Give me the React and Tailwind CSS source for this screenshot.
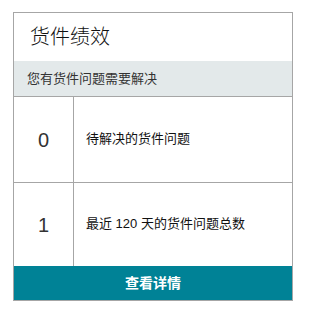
import React from "react";

const rows = [
  { value: "0", label: "待解决的货件问题" },
  { value: "1", label: "最近 120 天的货件问题总数" },
];

export default function App() {
  return (
    <div
      className="w-[305px] h-[311px] bg-white pt-[12px] pl-[13px]"
      style={{ fontFamily: '"Liberation Sans", Arial, "Noto Sans CJK SC", sans-serif' }}
    >
      <div className="w-[280px] border border-[#a6a6a6] flex flex-col">
        <div className="h-[48px] flex items-center pl-[16px]">
          <h2 className="text-[20px] font-light text-[#111] leading-none">货件绩效</h2>
        </div>
        <div className="h-[36px] bg-[#e3e9ea] flex items-center pl-[13px] border-b border-[#a6a6a6]">
          <span className="text-[13px] text-[#333]">您有货件问题需要解决</span>
        </div>
        {rows.map((row, i) => (
          <div
            key={i}
            className={
              i > 0
                ? "flex h-[84px] border-t border-[#a6a6a6]"
                : "flex h-[85px]"
            }
          >
            <div className="w-[60px] border-r border-[#a6a6a6] flex items-center justify-center">
              <span className="text-[20px] text-[#333]">{row.value}</span>
            </div>
            <div className="flex-1 flex items-center pl-[12px] pb-[2px]">
              <span className="text-[13px] text-[#111]">{row.label}</span>
            </div>
          </div>
        ))}
        <button className="h-[34px] bg-[#008296] text-white text-[14px] font-bold">
          查看详情
        </button>
      </div>
    </div>
  );
}
